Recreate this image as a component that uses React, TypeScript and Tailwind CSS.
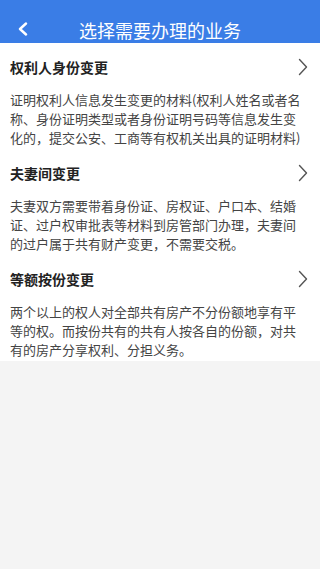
import React from 'react';

const items = [
  {
    title: '权利人身份变更',
    desc: '证明权利人信息发生变更的材料(权利人姓名或者名称、身份证明类型或者身份证明号码等信息发生变化的，提交公安、工商等有权机关出具的证明材料)',
  },
  {
    title: '夫妻间变更',
    desc: '夫妻双方需要带着身份证、房权证、户口本、结婚证、过户权审批表等材料到房管部门办理，夫妻间的过户属于共有财产变更，不需要交税。',
  },
  {
    title: '等额按份变更',
    desc: '两个以上的权人对全部共有房产不分份额地享有平等的权。而按份共有的共有人按各自的份额，对共有的房产分享权利、分担义务。',
  },
];

const App: React.FC = () => {
  return (
    <div
      className="min-h-[569px] w-[320px] bg-[#f4f4f4]"
      style={{ fontFamily: '"Noto Sans CJK SC", "Noto Sans", sans-serif' }}
    >
      <header className="relative flex h-[43px] items-start justify-center bg-[#3a7de6] pt-[19px]">
        <svg className="absolute left-[17px] top-[22px]" width="12" height="14" viewBox="0 0 12 14">
          <path d="M9 1.5 L3 7 L9 12.5" fill="none" stroke="#fff" strokeWidth="2.4" strokeLinecap="round" strokeLinejoin="round" />
        </svg>
        <h1 className="text-[18px] leading-[22px] text-white">选择需要办理的业务</h1>
      </header>

      <div className="bg-white">
        {items.map((item) => (
          <section key={item.title} className="pb-[2px] pl-[10px] pr-[12px] pt-[14px]">
            <div className="flex h-[20px] items-center justify-between">
              <h2 className="text-[14px] font-bold leading-[20px] text-[#222]">{item.title}</h2>
              <svg width="10" height="18" viewBox="0 0 10 18">
                <path d="M1.5 1.5 L8.5 9 L1.5 16.5" fill="none" stroke="#555" strokeWidth="1.4" strokeLinecap="round" strokeLinejoin="round" />
              </svg>
            </div>
            <p className="mt-[13px] pr-[2px] text-[13px] leading-[19px] text-[#444]">{item.desc}</p>
          </section>
        ))}
      </div>
    </div>
  );
};

export default App;
